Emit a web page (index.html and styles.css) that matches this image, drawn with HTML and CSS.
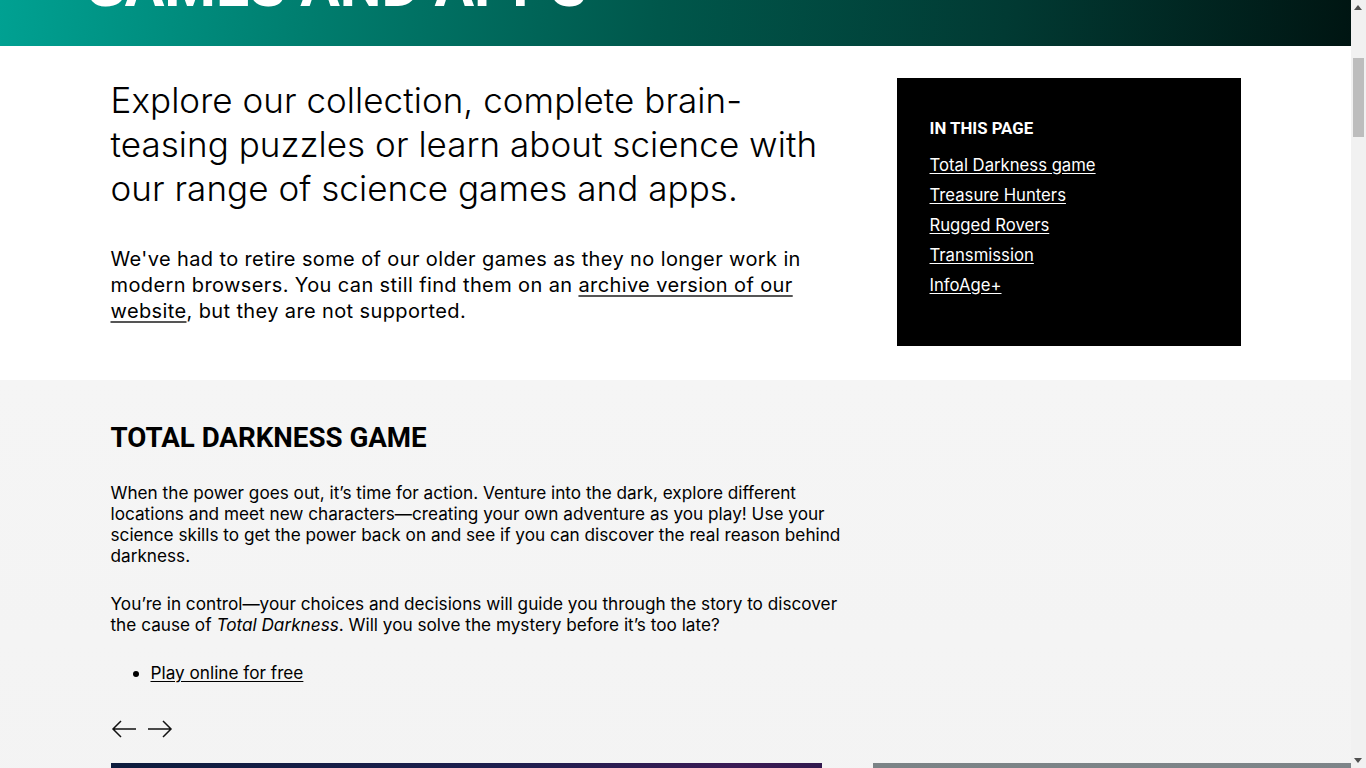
FILE: index.html
```html
<!DOCTYPE html>
<html lang="en">
<head>
<meta charset="utf-8">
<title>Games and apps</title>
<link rel="stylesheet" href="styles.css">
</head>
<body>
<header class="banner">
  <div class="banner-inner">
    <h1 class="banner-title">GAMES AND APPS</h1>
  </div>
</header>

<section class="intro">
  <div class="container intro-grid">
    <div class="intro-main">
      <p class="lead">Explore our collection, complete brain-teasing puzzles or learn about science with our range of science games and apps.</p>
      <p class="body-large">We've had to retire some of our older games as they no longer work in modern browsers. You can still find them on an <a href="#">archive version of our website</a>, but they are not supported.</p>
    </div>
    <nav class="toc">
      <h2 class="toc-title">IN THIS PAGE</h2>
      <ul class="toc-list">
        <li><a href="#">Total Darkness game</a></li>
        <li><a href="#">Treasure Hunters</a></li>
        <li><a href="#">Rugged Rovers</a></li>
        <li><a href="#">Transmission</a></li>
        <li><a href="#">InfoAge+</a></li>
      </ul>
    </nav>
  </div>
</section>

<section class="game">
  <div class="container">
    <div class="game-text">
      <h2 class="game-title">TOTAL DARKNESS GAME</h2>
      <p>When the power goes out, it’s time for action. Venture into the dark, explore different locations and meet new characters—creating your own adventure as you play! Use your science skills to get the power back on and see if you can discover the real reason behind darkness.</p>
      <p>You’re in control—your choices and decisions will guide you through the story to discover the cause of <em>Total Darkness</em>. Will you solve the mystery before it’s too late?</p>
      <ul class="game-links">
        <li><a href="#">Play online for free</a></li>
      </ul>
    </div>
    <div class="carousel-nav">
      <button class="arrow" aria-label="Previous">
        <svg width="26" height="20" viewBox="0 0 26 20"><path d="M25 10H2M10 2L2 10l8 8" fill="none" stroke="#111" stroke-width="1.5"/></svg>
      </button>
      <button class="arrow" aria-label="Next">
        <svg width="26" height="20" viewBox="0 0 26 20"><path d="M1 10h23M16 2l8 8-8 8" fill="none" stroke="#111" stroke-width="1.5"/></svg>
      </button>
    </div>
    <div class="carousel">
      <div class="slide slide-dark"></div>
      <div class="slide slide-grey"></div>
    </div>
  </div>
</section>
<div class="spacer"></div>

<div class="fake-scrollbar" aria-hidden="true">
  <span class="sb-up"></span>
  <span class="sb-thumb"></span>
  <span class="sb-down"></span>
</div>
<script src="script.js"></script>
</body>
</html>
```

FILE: styles.css
```css
html { overflow-y: scroll; }
body {
  margin: 0;
  padding-right: 15px;
  font-family: Inter, "Noto Sans", sans-serif;
  color: #000;
  background: #fff;
  overflow-x: hidden;
}
a { color: inherit; }

.container {
  max-width: 1130px;
  margin: 0 auto;
}

.banner {
  height: 446px;
  background: linear-gradient(95deg, #00a596 0%, #007d6e 25%, #00574b 50%, #013a33 75%, #001512 100%);
  display: flex;
  align-items: flex-end;
}
.banner-inner {
  width: 1182px;
  margin: 0 auto;
}
.banner-title {
  margin: 0 0 31px;
  font-family: Roboto, "Liberation Sans", sans-serif;
  font-weight: 700;
  font-size: 59px;
  line-height: 1;
  color: #fff;
}

.intro { padding: 32px 0 34px; }
.intro-grid {
  display: grid;
  grid-template-columns: 1fr 344px;
  column-gap: 50px;
  align-items: start;
}
.lead {
  margin: 0;
  font-size: 35px;
  line-height: 44px;
  font-weight: 300;
  letter-spacing: 0.05px;
}
.body-large {
  margin: 36px 0 0;
  font-size: 20px;
  line-height: 26px;
  letter-spacing: 0.38px;
}
.body-large a { text-decoration-color: #555; text-underline-offset: 3px; }

.toc {
  background: #000;
  color: #fff;
  padding: 38px 33px 46px;
}
.toc-title {
  margin: 0 0 10px;
  font-family: Roboto, "Liberation Sans", sans-serif;
  font-weight: 700;
  font-size: 16.8px;
  line-height: 24px;
}
.toc-list { list-style: none; margin: 0; padding: 0; }
.toc-list li { font-size: 16.7px; line-height: 30px; }
.toc-list a { color: #fff; text-underline-offset: 2px; }

.game {
  background: linear-gradient(#f5f5f5, #f2f2f2);
  padding: 40px 0 0;
}
.game-text { width: 735px; }
.game-title {
  margin: 0 0 26px;
  font-family: Roboto, "Liberation Sans", sans-serif;
  font-weight: 700;
  font-size: 27.7px;
  line-height: 36px;
}
.game-text p {
  margin: 0 0 27px;
  font-size: 17.2px;
  line-height: 21px;
}
.game-links {
  margin: 0;
  padding-left: 40px;
  font-size: 17.2px;
  line-height: 21px;
}
.game-links a { text-underline-offset: 2px; }

.carousel-nav {
  display: flex;
  gap: 10px;
  margin-top: 36px;
}
.arrow {
  background: none;
  border: 0;
  padding: 0;
  width: 26px;
  height: 20px;
  cursor: pointer;
}
.carousel {
  display: flex;
  gap: 51px;
  margin-top: 24px;
}
.slide {
  flex: 0 0 711px;
  height: 400px;
}
.slide-dark { background: linear-gradient(100deg, #0d1c3d 0%, #1d1e4e 50%, #3a1a55 80%, #2a1848 100%); }
.slide-grey { background: linear-gradient(90deg, #7b8386, #7e8589 70%, #857f88); }

.spacer { height: 6000px; }

.fake-scrollbar {
  position: fixed;
  top: 0;
  right: 0;
  bottom: 0;
  width: 15px;
  background: #f1f1f1;
}
.sb-up, .sb-down {
  position: absolute;
  left: 3px;
  width: 0;
  height: 0;
  border-left: 4.5px solid transparent;
  border-right: 4.5px solid transparent;
}
.sb-up { top: 5px; border-bottom: 5px solid #505050; }
.sb-down { bottom: 5px; border-top: 5px solid #505050; }
.sb-thumb {
  position: absolute;
  left: 2px;
  width: 11px;
  top: 58px;
  height: 79px;
  background: #bdbdbd;
}
```

FILE: script.js
```js
window.scrollTo(0, 400);
```
